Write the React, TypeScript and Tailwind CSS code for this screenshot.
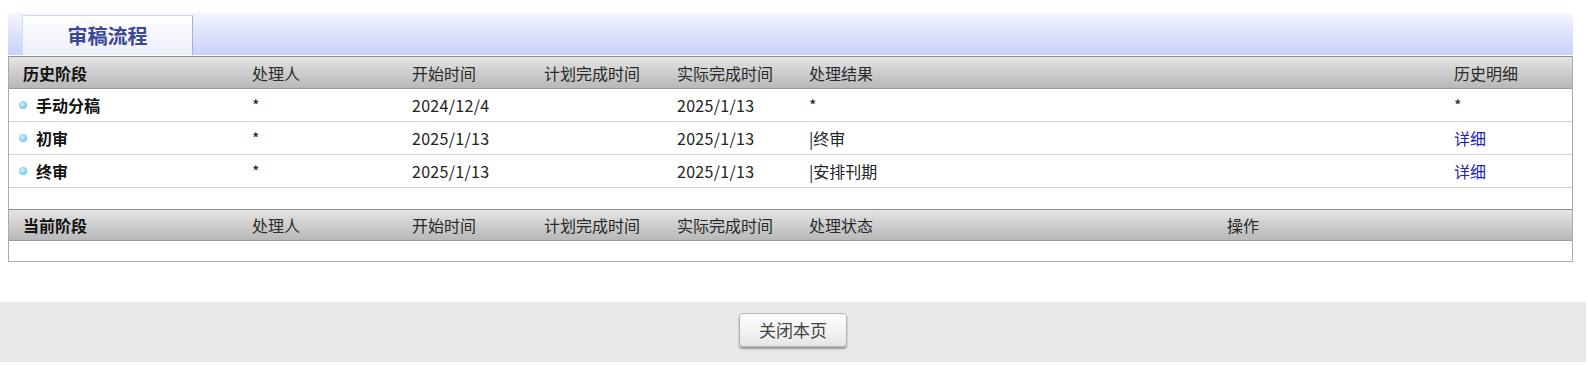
import React from 'react';

const cols = 'grid grid-cols-[243px_160px_132px_133px_132px_645px_1fr]';

interface HistoryRow {
  stage: string;
  person: string;
  start: string;
  plan: string;
  actual: string;
  result: string;
  detail: string;
  link: boolean;
}

const history: HistoryRow[] = [
  { stage: '手动分稿', person: '*', start: '2024/12/4', plan: '', actual: '2025/1/13', result: '*', detail: '*', link: false },
  { stage: '初审', person: '*', start: '2025/1/13', plan: '', actual: '2025/1/13', result: '|终审', detail: '详细', link: true },
  { stage: '终审', person: '*', start: '2025/1/13', plan: '', actual: '2025/1/13', result: '|安排刊期', detail: '详细', link: true },
];

export default function App() {
  return (
    <div className="w-[1588px] h-[365px] bg-white overflow-hidden font-['Noto_Sans_CJK_SC','Liberation_Sans',sans-serif]">
      <div className="pt-[13px] pl-[8px] pr-[15px]">
        {/* tab band */}
        <div className="h-[43px] flex items-end pl-[14px] bg-gradient-to-b from-[#f4f5fd] to-[#c7d1fb] border-b border-white">
          <div className="w-[171px] h-[40px] flex items-center justify-center bg-gradient-to-b from-white to-[#eceffb] border border-b-0 border-[#d6dbef] border-r-[#a9b0cf] text-[20px] font-bold text-[#3a4897]">
            审稿流程
          </div>
        </div>

        {/* flow table */}
        <div className="border-l border-r border-b border-[#ababab]">
          <div className={`${cols} h-[33px] items-center border-t border-b border-t-[#8e8e8e] border-b-[#9c9c9c] bg-gradient-to-b from-[#e4e4e4] to-[#b8b8b8] text-[16px] text-[#2a2a2a]`}>
            <div className="pl-[14px] font-bold text-[#111]">历史阶段</div>
            <div>处理人</div>
            <div>开始时间</div>
            <div>计划完成时间</div>
            <div>实际完成时间</div>
            <div>处理结果</div>
            <div>历史明细</div>
          </div>
          {history.map((r, i) => (
            <div key={i} className={`${cols} h-[33px] items-center border-b border-[#d2d2d2] text-[16px] tracking-[0.3px] text-[#222]`}>
              <div className="pl-[10px] flex items-center gap-[9px] tracking-normal">
                <span className="w-[8px] h-[8px] rounded-full bg-[radial-gradient(circle_at_40%_40%,#d2f4fd,#47b3dc)]" />
                <span className="text-[16px] font-bold text-[#111]">{r.stage}</span>
              </div>
              <div>{r.person}</div>
              <div>{r.start}</div>
              <div>{r.plan}</div>
              <div>{r.actual}</div>
              <div className="tracking-normal">{r.result}</div>
              <div className={r.link ? 'tracking-normal text-[#1f1fc4]' : ''}>{r.detail}</div>
            </div>
          ))}
          <div className="h-[21px]" />
          <div className={`${cols} h-[32px] items-center border-t border-b border-t-[#8e8e8e] border-b-[#9c9c9c] bg-gradient-to-b from-[#e4e4e4] to-[#b8b8b8] text-[16px] text-[#2a2a2a]`}>
            <div className="pl-[14px] font-bold text-[#111]">当前阶段</div>
            <div>处理人</div>
            <div>开始时间</div>
            <div>计划完成时间</div>
            <div>实际完成时间</div>
            <div className="grid grid-cols-[418px_1fr]">
              <span>处理状态</span>
              <span>操作</span>
            </div>
            <div />
          </div>
          <div className="h-[20px]" />
        </div>
      </div>

      {/* footer */}
      <div className="mt-[40px] mr-[2px] h-[60px] bg-[#e8e8e8] flex justify-center pt-[11px]">
        <button className="w-[108px] h-[34px] rounded-[4px] border border-[#b4b4b4] bg-gradient-to-b from-white to-[#e6e6e6] shadow-[0_2px_2px_rgba(0,0,0,0.35)] text-[17px] text-[#444]">
          关闭本页
        </button>
      </div>
    </div>
  );
}
